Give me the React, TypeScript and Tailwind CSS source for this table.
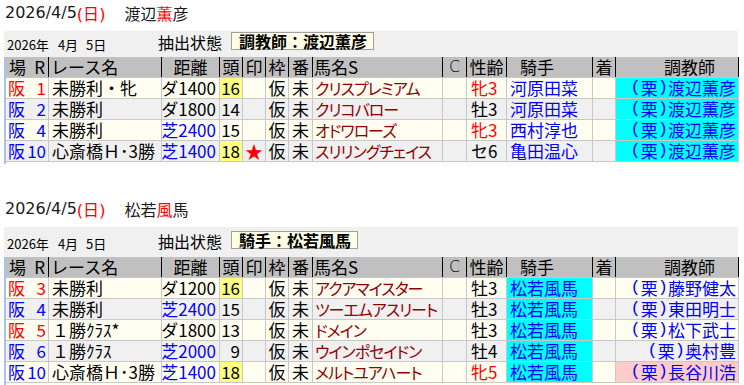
import React from "react";

type Row = {
  r: string;
  rRed: boolean;
  race: string;
  dist: string;
  distBlue: boolean;
  heads: string;
  headsYellow: boolean;
  mark: boolean;
  horse: string;
  sex: string;
  sexRed: boolean;
  jockey: string;
  jockeyCyan: boolean;
  trainer: string;
  trainerBg: string;
};

const COLS =
  "grid grid-cols-[42px_112px_57px_22px_22px_22px_23px_129px_23px_39px_85px_22px_122px] gap-x-px pr-px";

const sec1: Row[] = [
  { r: "1", rRed: true, race: "未勝利・牝", dist: "ダ1400", distBlue: false, heads: "16", headsYellow: true, mark: false, horse: "クリスプレミアム", sex: "牝3", sexRed: true, jockey: "河原田菜", jockeyCyan: false, trainer: "渡辺薫彦", trainerBg: "cyan" },
  { r: "2", rRed: false, race: "未勝利", dist: "ダ1800", distBlue: false, heads: "14", headsYellow: false, mark: false, horse: "クリコバロー", sex: "牡3", sexRed: false, jockey: "河原田菜", jockeyCyan: false, trainer: "渡辺薫彦", trainerBg: "cyan" },
  { r: "4", rRed: false, race: "未勝利", dist: "芝2400", distBlue: true, heads: "15", headsYellow: false, mark: false, horse: "オドワローズ", sex: "牝3", sexRed: true, jockey: "西村淳也", jockeyCyan: false, trainer: "渡辺薫彦", trainerBg: "cyan" },
  { r: "10", rRed: false, race: "心斎橋Ｈ･3勝", dist: "芝1400", distBlue: true, heads: "18", headsYellow: true, mark: true, horse: "スリリングチェイス", sex: "セ6", sexRed: false, jockey: "亀田温心", jockeyCyan: false, trainer: "渡辺薫彦", trainerBg: "cyan" },
];

const sec2: Row[] = [
  { r: "3", rRed: true, race: "未勝利", dist: "ダ1200", distBlue: false, heads: "16", headsYellow: true, mark: false, horse: "アクアマイスター", sex: "牡3", sexRed: false, jockey: "松若風馬", jockeyCyan: true, trainer: "藤野健太", trainerBg: "none" },
  { r: "4", rRed: false, race: "未勝利", dist: "芝2400", distBlue: true, heads: "15", headsYellow: false, mark: false, horse: "ツーエムアスリート", sex: "牡3", sexRed: false, jockey: "松若風馬", jockeyCyan: true, trainer: "東田明士", trainerBg: "none" },
  { r: "5", rRed: true, race: "１勝ｸﾗｽ*", dist: "ダ1800", distBlue: false, heads: "13", headsYellow: false, mark: false, horse: "ドメイン", sex: "牡3", sexRed: false, jockey: "松若風馬", jockeyCyan: true, trainer: "松下武士", trainerBg: "none" },
  { r: "6", rRed: false, race: "１勝ｸﾗｽ", dist: "芝2000", distBlue: true, heads: "9", headsYellow: false, mark: false, horse: "ウインポセイドン", sex: "牡4", sexRed: false, jockey: "松若風馬", jockeyCyan: true, trainer: "奥村豊", trainerBg: "none" },
  { r: "10", rRed: false, race: "心斎橋Ｈ･3勝", dist: "芝1400", distBlue: true, heads: "18", headsYellow: true, mark: false, horse: "メルトユアハート", sex: "牝5", sexRed: true, jockey: "松若風馬", jockeyCyan: true, trainer: "長谷川浩", trainerBg: "pink" },
];

const cell = "flex items-center leading-[20px] whitespace-nowrap";

function Header() {
  return (
    <div className={`${COLS} bg-black h-[20px] text-[17px] text-black`}>
      <div className={`${cell} bg-[#c0c0c0] justify-between pl-[3px] pr-[3px]`}>
        <span>場</span>
        <span>R</span>
      </div>
      <div className={`${cell} bg-[#c0c0c0] pl-[2px]`}>レース名</div>
      <div className={`${cell} bg-[#c0c0c0] justify-center`}>距離</div>
      <div className={`${cell} bg-[#c0c0c0] justify-center`}>頭</div>
      <div className={`${cell} bg-[#c0c0c0] justify-center`}>印</div>
      <div className={`${cell} bg-[#c0c0c0] justify-center`}>枠</div>
      <div className={`${cell} bg-[#c0c0c0] justify-center`}>番</div>
      <div className={`${cell} bg-[#c0c0c0] pl-[1px]`}>馬名S</div>
      <div className={`${cell} bg-[#c0c0c0] justify-center font-['DejaVu_Sans'] text-[16px] font-light`}>C</div>
      <div className={`${cell} bg-[#c0c0c0] justify-center`}>性齢</div>
      <div className={`${cell} bg-[#c0c0c0] pl-[13px]`}>騎手</div>
      <div className={`${cell} bg-[#c0c0c0] justify-center`}>着</div>
      <div className={`${cell} bg-[#c0c0c0] pl-[48px]`}>調教師</div>
    </div>
  );
}

function Paren({ c }: { c: string }) {
  return <span className="font-['Liberation_Mono']">{c}</span>;
}

function BodyRow({ row, idx }: { row: Row; idx: number }) {
  const bg = idx % 2 === 0 ? "bg-[#fffef0]" : "bg-[#f0f0f0]";
  const rColor = row.rRed ? "text-[#ff0000]" : "text-[#0000ff]";
  const trainerBg =
    row.trainerBg === "cyan" ? "bg-[#00ffff]" : row.trainerBg === "pink" ? "bg-[#ffcccc]" : bg;
  return (
    <div className={`${COLS} bg-[#c8c8c8] h-[20px] text-[17px] text-black`}>
      <div className={`${cell} ${bg} ${rColor} justify-between pl-[2px] pr-[2px]`}>
        <span>阪</span>
        <span>{row.r}</span>
      </div>
      <div className={`${cell} ${bg} pl-[3px]`}>{row.race}</div>
      <div className={`${cell} ${bg} justify-end pr-[3px] ${row.distBlue ? "text-[#0000ff]" : "text-black"}`}>
        {row.dist}
      </div>
      <div className={`${cell} ${row.headsYellow ? "bg-[#ffff80]" : bg} justify-end pr-[2px]`}>{row.heads}</div>
      <div className={`${cell} ${bg} justify-center text-[#ff0000] text-[18px]`}>{row.mark ? "★" : ""}</div>
      <div className={`${cell} ${bg} justify-center`}>仮</div>
      <div className={`${cell} ${bg} justify-center`}>未</div>
      <div
        className={`${cell} ${bg} pl-[2px] text-[#900000] text-[16px] tracking-[-1px] [font-feature-settings:'palt']`}
      >
        {row.horse}
      </div>
      <div className={`${cell} ${bg}`}></div>
      <div className={`${cell} ${bg} pl-[4px] ${row.sexRed ? "text-[#ff0000]" : "text-black"}`}>{row.sex}</div>
      <div className={`${cell} ${row.jockeyCyan ? "bg-[#00ffff]" : bg} pl-[3px] text-[#0000ff]`}>{row.jockey}</div>
      <div className={`${cell} ${bg}`}></div>
      <div className={`${cell} ${trainerBg} justify-end pr-[2px] text-[#0000ff]`}>
        <Paren c="(" />栗<Paren c=")" />
        {row.trainer}
      </div>
    </div>
  );
}

function Section({
  name,
  redIdx,
  boxLabel,
  rows,
  bandH,
  bandPad,
}: {
  name: string;
  redIdx: number;
  boxLabel: string;
  rows: Row[];
  bandH: string;
  bandPad: string;
}) {
  const chars = Array.from(name);
  return (
    <div className="flex flex-col">
      <div className="h-[31px] pt-[3px] pl-[1px] flex items-start text-[16px] leading-[20px] text-[#1a1a1a]">
        <span className="font-['DejaVu_Sans','Noto_Sans_CJK_JP',sans-serif]">2026/4/5</span>
        <span className="text-[#ff0000] font-['DejaVu_Sans','Noto_Sans_CJK_JP',sans-serif]">
          (<span className="font-['Noto_Sans_CJK_JP']">日</span>)
        </span>
        <span className="ml-[19px] font-['Noto_Sans_CJK_JP',sans-serif]">
          {chars.map((c, i) => (
            <span key={i} className={i === redIdx ? "text-[#ff0000]" : ""}>
              {c}
            </span>
          ))}
        </span>
      </div>
      <div className={`w-[734px] ${bandH} bg-[#f0f0f0] flex items-start ${bandPad}`}>
        <div className="w-[154px] pl-[3px] pt-[6px] text-[13px] leading-[14px] text-black flex">
          <span>2026年</span>
          <span className="ml-[9px]">4月</span>
          <span className="ml-[8px]">5日</span>
        </div>
        <div className="w-[73px] pt-[1px] text-[16px] leading-[18px] text-black">抽出状態</div>
        <div className="h-[18px] border border-[#a0a0a0] bg-[#ffffe6] pl-[7px] pr-[6px] flex items-center text-[16px] leading-[16px] font-bold text-black">
          {boxLabel}
        </div>
      </div>
      <div className="w-[735px] border-l-2 border-[#a8c4ec] bg-[#c8c8c8] flex flex-col gap-y-px">
        <Header />
        {rows.map((r, i) => (
          <BodyRow key={i} row={r} idx={i} />
        ))}
        <div className="h-[2px] bg-[#fffef0]"></div>
      </div>
    </div>
  );
}

export default function App() {
  return (
    <div className="w-[744px] h-[385px] overflow-hidden bg-white pl-[4px] font-['Noto_Sans_CJK_JP',sans-serif]">
      <Section
        name="渡辺薫彦"
        redIdx={2}
        boxLabel="調教師：渡辺薫彦"
        rows={sec1}
        bandH="h-[26px]"
        bandPad="pt-[1px]"
      />
      <div className="h-[32px]"></div>
      <Section
        name="松若風馬"
        redIdx={2}
        boxLabel="騎手：松若風馬"
        rows={sec2}
        bandH="h-[30px]"
        bandPad="pt-[4px]"
      />
    </div>
  );
}
